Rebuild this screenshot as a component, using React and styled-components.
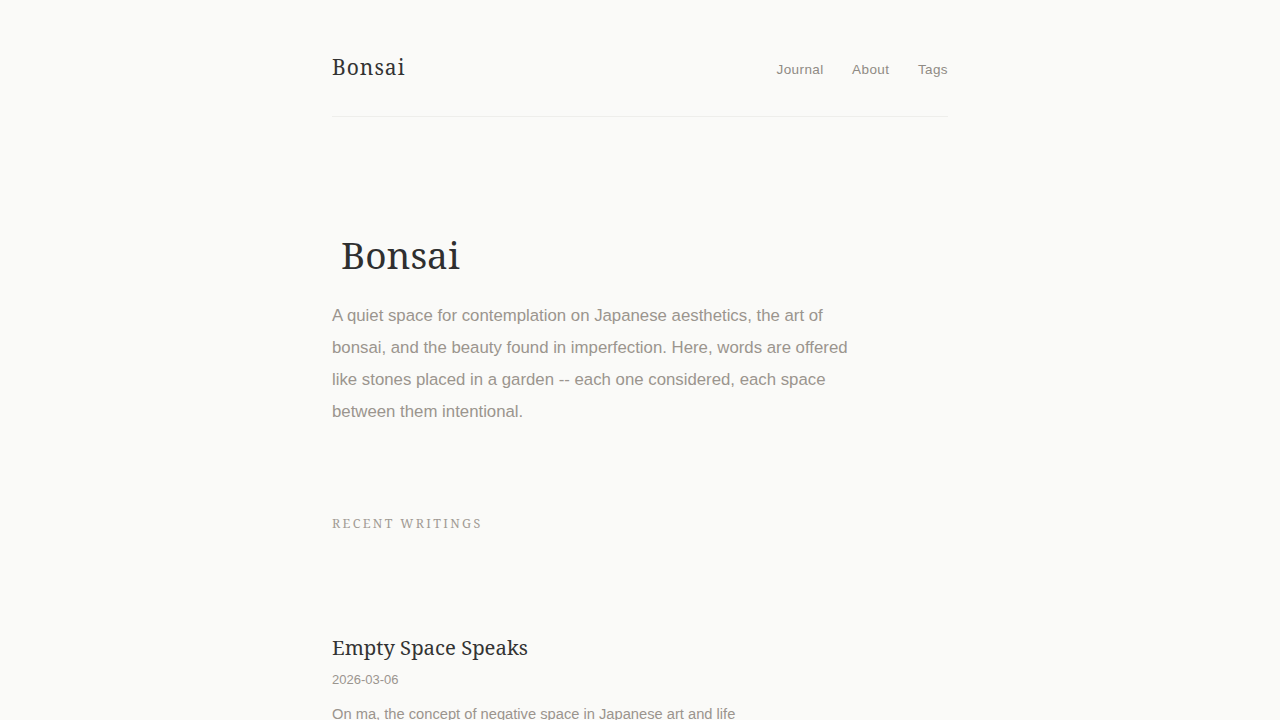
import React from 'react';
import styled, { createGlobalStyle } from 'styled-components';

const GlobalStyle = createGlobalStyle`
  html, body {
    margin: 0;
    padding: 0;
    background: #fafaf8;
  }
  * {
    box-sizing: border-box;
  }
`;

const serif = `"Noto Serif", "Liberation Serif", serif`;
const sans = `"Liberation Sans", Arial, sans-serif`;

const Page = styled.div`
  max-width: 680px;
  margin: 0 auto;
  padding: 0 32px;
`;

const Header = styled.header`
  display: flex;
  justify-content: space-between;
  align-items: center;
  padding: 53px 0 35px;
  border-bottom: 1px solid #eeeeeb;
`;

const Logo = styled.a`
  font-family: ${serif};
  font-size: 21px;
  letter-spacing: 1px;
  color: #333;
  text-decoration: none;
`;

const Nav = styled.nav`
  display: flex;
  gap: 28.5px;
  padding-top: 5px;
`;

const NavLink = styled.a`
  font-family: ${sans};
  font-size: 13.5px;
  letter-spacing: 0.4px;
  color: #8f8a84;
  text-decoration: none;
`;

const Hero = styled.section`
  padding-top: 116px;
`;

const Title = styled.h1`
  margin: 0;
  padding-left: 9px;
  font-family: ${serif};
  font-weight: 400;
  font-size: 37px;
  color: #2f2f2f;
  line-height: 1.2;
`;

const Intro = styled.p`
  margin: 23px 0 0;
  max-width: 540px;
  font-family: ${sans};
  font-size: 16.8px;
  line-height: 31.7px;
  color: #9b958e;
`;

const SectionLabel = styled.h2`
  margin: 88px 0 0;
  font-family: ${serif};
  font-weight: 400;
  font-size: 12.5px;
  letter-spacing: 2.35px;
  color: #a29c95;
  text-transform: uppercase;
`;

const PostList = styled.div`
  display: flex;
  flex-direction: column;
  margin-top: 101px;
`;

const Post = styled.article`
  display: flex;
  flex-direction: column;
`;

const PostTitle = styled.h3`
  margin: 0;
  font-family: ${serif};
  font-weight: 400;
  font-size: 20.3px;
  color: #333;
`;

const PostDate = styled.time`
  margin-top: 11px;
  font-family: ${sans};
  font-size: 13px;
  color: #9a958f;
`;

const Excerpt = styled.p`
  margin: 16px 0 0;
  font-family: ${sans};
  font-size: 14.7px;
  line-height: 1.6;
  color: #9a948d;
`;

const posts = [
  {
    title: 'Empty Space Speaks',
    date: '2026-03-06',
    excerpt: 'On ma, the concept of negative space in Japanese art and life',
  },
];

export default function App() {
  return (
    <>
      <GlobalStyle />
      <Page>
        <Header>
          <Logo href="#">Bonsai</Logo>
          <Nav>
            <NavLink href="#">Journal</NavLink>
            <NavLink href="#">About</NavLink>
            <NavLink href="#">Tags</NavLink>
          </Nav>
        </Header>
        <Hero>
          <Title>Bonsai</Title>
          <Intro>
            A quiet space for contemplation on Japanese aesthetics, the art of bonsai, and the
            beauty found in imperfection. Here, words are offered like stones placed in a garden
            -- each one considered, each space between them intentional.
          </Intro>
        </Hero>
        <SectionLabel>Recent Writings</SectionLabel>
        <PostList>
          {posts.map((p) => (
            <Post key={p.title}>
              <PostTitle>{p.title}</PostTitle>
              <PostDate>{p.date}</PostDate>
              <Excerpt>{p.excerpt}</Excerpt>
            </Post>
          ))}
        </PostList>
      </Page>
    </>
  );
}
